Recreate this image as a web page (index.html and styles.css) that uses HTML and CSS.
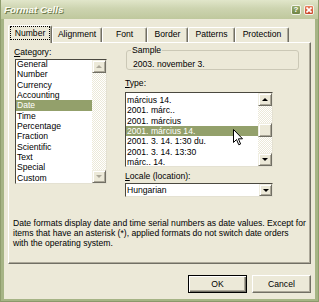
FILE: index.html
```html
<!DOCTYPE html>
<html>
<head>
<meta charset="utf-8">
<title>Format Cells</title>
<link rel="stylesheet" href="styles.css">
</head>
<body>
<div class="window">
  <div class="titlebar">
    <span class="title">Format Cells</span>
    <span class="tbtn help">?</span>
    <span class="tbtn close"><svg width="6" height="6" viewBox="0 0 6 6"><path d="M0.5 0.5 L5.5 5.5 M5.5 0.5 L0.5 5.5" stroke="#fff" stroke-width="1.6"/></svg></span>
  </div>
  <div class="client">
    <div class="tabs">
      <div class="tab sel t-number"><span class="focus">Number</span></div>
      <div class="tab t-align">Alignment</div>
      <div class="tab t-font">Font</div>
      <div class="tab t-border">Border</div>
      <div class="tab t-patterns">Patterns</div>
      <div class="tab t-protection">Protection</div>
    </div>
    <div class="panel">
      <div class="cols">
        <div class="col-left">
          <div class="label cat-label"><u>C</u>ategory:</div>
          <div class="listbox cat">
            <ul class="items">
              <li>General</li>
              <li>Number</li>
              <li>Currency</li>
              <li>Accounting</li>
              <li class="selected">Date</li>
              <li>Time</li>
              <li>Percentage</li>
              <li>Fraction</li>
              <li>Scientific</li>
              <li>Text</li>
              <li>Special</li>
              <li>Custom</li>
            </ul>
            <div class="vscroll disabled">
              <div class="sbtn"><i class="arr up"></i></div>
              <div class="track"></div>
              <div class="sbtn"><i class="arr down"></i></div>
            </div>
          </div>
        </div>
        <div class="col-right">
          <fieldset class="sample">
            <legend>Sample</legend>
            <div class="sample-text">2003. november 3.</div>
          </fieldset>
          <div class="label type-label"><u>T</u>ype:</div>
          <div class="listbox typ">
            <ul class="items">
              <li>március 14.</li>
              <li>2001. márc..</li>
              <li>2001. március</li>
              <li class="selected">2001. március 14.</li>
              <li>2001. 3. 14. 1:30 du.</li>
              <li>2001. 3. 14. 13:30</li>
              <li>márc.. 14.</li>
            </ul>
            <div class="vscroll">
              <div class="sbtn"><i class="arr up"></i></div>
              <div class="gap-top"></div>
              <div class="thumb"></div>
              <div class="track"></div>
              <div class="sbtn"><i class="arr down"></i></div>
            </div>
            <svg class="cursor" width="11" height="17" viewBox="0 0 11 17"><path d="M0.5 0.5 L0.5 13.5 L3.5 10.5 L5.8 15.8 L7.6 15 L5.4 9.8 L9.5 9.8 Z" fill="#fff" stroke="#000" stroke-width="1" stroke-linejoin="miter"/></svg>
          </div>
          <div class="label locale-label"><u>L</u>ocale (location):</div>
          <div class="combo">
            <span class="combo-text">Hungarian</span>
            <span class="sbtn cbtn"><i class="arr down"></i></span>
          </div>
        </div>
      </div>
      <p class="desc">Date formats display date and time serial numbers as date values. Except for<br>items that have an asterisk (*), applied formats do not switch date orders<br>with the operating system.</p>
    </div>
    <div class="buttons">
      <button class="btn default">OK</button>
      <button class="btn">Cancel</button>
    </div>
  </div>
</div>
</body>
</html>
```
FILE: styles.css
```css
html, body {
  margin: 0;
  padding: 0;
}
body {
  width: 319px;
  height: 302px;
  overflow: hidden;
  font-family: "Liberation Sans", Arial, sans-serif;
  font-size: 8.6px;
  line-height: 10px;
  color: #000;
}
.window {
  width: 319px;
  height: 302px;
  box-sizing: border-box;
  display: flex;
  flex-direction: column;
  background: #a6b485;
  padding: 0 3px 2px;
  border-left: 1px solid #8f9d6d;
  border-right: 1px solid #8f9d6d;
  border-bottom: 1px solid #8a986a;
}
.titlebar {
  height: 19px;
  margin: 0 -3px;
  box-sizing: border-box;
  display: flex;
  align-items: center;
  padding: 1px 4px 0 3px;
  background: linear-gradient(#e1e6ca, #cdd4b0 45%, #bfc89d);
}
.title {
  flex: 1;
  color: #fbfbf2;
  font: italic bold 9.8px/12px "Liberation Sans", Arial, sans-serif;
  text-shadow: 1px 1px 0 #6d7a4b;
}
.tbtn {
  width: 10px;
  height: 10px;
  margin-left: 3px;
  box-sizing: border-box;
  border: 1px solid #f4f4ea;
  border-radius: 2px;
  display: flex;
  align-items: center;
  justify-content: center;
  color: #fff;
  font: bold 8px/8px "Liberation Sans", Arial, sans-serif;
}
.help {
  background: linear-gradient(#97ab6a, #6f8445);
}
.close {
  background: linear-gradient(#e9815f, #c9452a);
}
.client {
  flex: 1;
  background: #ece9d8;
  display: flex;
  flex-direction: column;
}
.tabs {
  display: flex;
  align-items: flex-end;
  height: 18px;
  margin-top: 6px;
  margin-bottom: -1px;
  padding-left: 4px;
  position: relative;
  z-index: 1;
}
.tab {
  height: 15px;
  margin-bottom: 1px;
  box-sizing: border-box;
  border: 1px solid #fff;
  border-bottom: none;
  border-right-color: #716f64;
  border-radius: 2px 2px 0 0;
  box-shadow: inset -1px 0 0 #aca899;
  background: #ece9d8;
  text-align: center;
  line-height: 13px;
  white-space: nowrap;
}
.tab.sel {
  height: 18px;
  margin-bottom: 0;
  padding-top: 1px;
}
.t-number { width: 44px; }
.t-align { width: 50px; }
.t-font { width: 45px; }
.t-border { width: 41px; }
.t-patterns { width: 47px; }
.t-protection { width: 54px; }
.focus {
  display: inline-block;
  outline: 1px dotted #000;
  padding: 0 4px;
  line-height: 12px;
}
.panel {
  margin: 0 4px;
  height: 222px;
  box-sizing: border-box;
  border: 1px solid;
  border-color: #fff #716f64 #716f64 #fff;
  box-shadow: inset -1px -1px 0 #aca899;
  padding: 4px 0 0 4px;
}
.cols {
  display: grid;
  grid-template-columns: 92px 174px;
  column-gap: 18px;
  margin-left: 2px;
  align-items: start;
}
.label {
  line-height: 10px;
  white-space: nowrap;
}
.cat-label {
  margin-left: -1px;
}
.listbox {
  position: relative;
  display: flex;
  box-sizing: border-box;
  background: #fff;
  border: 1px solid;
  border-color: #4a4840 #e4e1d2 #e4e1d2 #4a4840;
}
.listbox.cat {
  margin-top: 2px;
  height: 125px;
}
.listbox.typ {
  margin-top: 4px;
  width: 148px;
  height: 75px;
}
.items {
  flex: 1;
  list-style: none;
  margin: 0;
  padding: 0;
  overflow: hidden;
}
.cat .items {
  margin-top: -1px;
}
.typ .items {
  padding-top: 2px;
}
.items li {
  height: 10.35px;
  line-height: 10.35px;
  padding-left: 1px;
  white-space: nowrap;
}
.items li.selected {
  background: #93a06b;
  color: #fff;
}
.vscroll {
  width: 14px;
  display: flex;
  flex-direction: column;
  background: repeating-conic-gradient(#fff 0 25%, #ece9d8 0 50%) 0 0 / 2px 2px;
}
.sbtn {
  height: 13px;
  box-sizing: border-box;
  background: #ece9d8;
  border: 1px solid;
  border-color: #f1efe2 #716f64 #716f64 #f1efe2;
  box-shadow: inset 1px 1px 0 #fff, inset -1px -1px 0 #aca899;
  display: flex;
  align-items: center;
  justify-content: center;
}
.track {
  flex: 1;
}
.gap-top {
  height: 17px;
}
.thumb {
  height: 14px;
  box-sizing: border-box;
  background: #ece9d8;
  border: 1px solid;
  border-color: #f1efe2 #716f64 #716f64 #f1efe2;
  box-shadow: inset 1px 1px 0 #fff, inset -1px -1px 0 #aca899;
}
.arr {
  display: block;
  width: 0;
  height: 0;
  border-left: 3px solid transparent;
  border-right: 3px solid transparent;
}
.arr.up {
  border-bottom: 3px solid #000;
}
.arr.down {
  border-top: 3px solid #000;
}
.disabled .arr.up {
  border-bottom-color: #aca899;
}
.disabled .arr.down {
  border-top-color: #aca899;
}
.cursor {
  position: absolute;
  left: 107px;
  top: 36px;
}
.sample {
  margin: -2px 0 0 1px;
  width: 173px;
  box-sizing: border-box;
  padding: 4px 6px 0;
  border: 1px solid #cbc8b6;
  border-radius: 3px;
  min-inline-size: 0;
}
.sample legend {
  padding: 0 1px;
  margin-left: -2px;
  line-height: 10px;
}
.sample-text {
  line-height: 10px;
}
.type-label {
  margin-top: 8px;
}
.locale-label {
  margin-top: 4px;
}
.combo {
  margin-top: 2px;
  width: 148px;
  height: 14px;
  box-sizing: border-box;
  border: 1px solid;
  border-color: #4a4840 #e4e1d2 #e4e1d2 #4a4840;
  background: #fff;
  display: flex;
  align-items: center;
}
.combo-text {
  flex: 1;
  padding-left: 1px;
  line-height: 12px;
}
.cbtn {
  width: 13px;
  height: 12px;
}
.desc {
  margin: 21px 0 0;
  line-height: 10px;
  white-space: nowrap;
}
.buttons {
  display: flex;
  justify-content: flex-end;
  gap: 5px;
  margin-top: 11px;
  padding-right: 4px;
}
.btn {
  width: 59px;
  height: 18px;
  padding: 0;
  font: inherit;
  line-height: 14px;
  color: #000;
  background: #ece9d8;
  border: 1px solid;
  border-color: #fff #716f64 #716f64 #fff;
  box-shadow: inset -1px -1px 0 #aca899;
}
.btn.default {
  border-color: #000;
  box-shadow: inset 1px 1px 0 #fff, inset -1px -1px 0 #716f64, inset -2px -2px 0 #aca899;
}
```
